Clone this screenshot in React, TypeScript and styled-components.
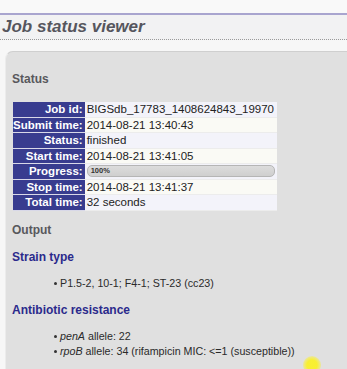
import React from "react";
import styled, { createGlobalStyle } from "styled-components";

const Global = createGlobalStyle`
  html, body { margin: 0; padding: 0; background: #f7f7f7; }
  body { font-family: "Liberation Sans", Arial, sans-serif; overflow: hidden; }
`;

const Page = styled.div`
  width: 347px;
  height: 369px;
  position: relative;
  overflow: hidden;
  background: #f7f7f7;
`;

const TopBar = styled.div`
  height: 13px;
  background: #f9f9f9;
  border-bottom: 2px solid #a9a5cf;
`;

const TitleBar = styled.div`
  height: 22px;
  padding: 2px 0 0 2px;
  background: #f2f2f3;
  border-bottom: 1px dotted #9a9a9a;
`;

const Title = styled.h1`
  margin: 0;
  font-size: 17px;
  font-weight: bold;
  font-style: italic;
  color: #56565e;
  line-height: 20px;
`;

const Panel = styled.div`
  margin: 11px 0 0 5px;
  background: #e0e0e0;
  border-top: 1px solid #cfcfcf;
  border-left: 1px solid #ececec;
  border-top-left-radius: 8px;
  padding: 20px 0 0 6px;
  height: 320px;
`;

const SectionHead = styled.h2`
  margin: 0;
  font-size: 12px;
  font-weight: bold;
  color: #58585c;
  line-height: 14px;
`;

const Table = styled.table`
  margin: 16px 0 0 1px;
  border-collapse: separate;
  border-spacing: 0;
  width: 264px;
  font-size: 11.5px;
`;

const Label = styled.th`
  width: 68px;
  background: #383c8f;
  color: #ffffff;
  font-weight: bold;
  text-align: right;
  padding: 0 2px 0 0;
  height: 14.5px;
  line-height: 14px;
  border-bottom: 1px solid #d8d8e8;
  white-space: nowrap;
`;

const Value = styled.td<{ $alt: boolean }>`
  background: ${(p) => (p.$alt ? "#fafaf5" : "#f3f3fa")};
  color: #222;
  padding: 0 0 0 2px;
  height: 14.5px;
  line-height: 14px;
  border-bottom: 1px solid #ececec;
  white-space: nowrap;
`;

const ProgressTrack = styled.div`
  width: 188px;
  height: 12px;
  border: 1px solid #b5b5b5;
  border-radius: 5px;
  background: linear-gradient(#dcdcdc, #cfcfcf);
  font-size: 7.5px;
  font-weight: bold;
  line-height: 10px;
  padding-left: 3px;
  color: #333;
  box-sizing: border-box;
`;

const OutputHead = styled(SectionHead)`
  margin-top: 12px;
`;

const SubHead = styled.h3`
  margin: 13px 0 0 0;
  font-size: 12px;
  font-weight: bold;
  color: #2b2a8c;
  line-height: 14px;
`;

const List = styled.ul`
  margin: 12px 0 0 0;
  padding: 0 0 0 48px;
  font-size: 10.7px;
  color: #2a2a2a;
  line-height: 14.5px;
  list-style: none;
`;

const Item = styled.li`
  position: relative;
  &::before {
    content: "";
    position: absolute;
    left: -6px;
    top: 6px;
    width: 3px;
    height: 3px;
    border-radius: 50%;
    background: #333;
  }
`;

const Cursor = styled.div`
  position: absolute;
  left: 303px;
  top: 356px;
  width: 18px;
  height: 18px;
  border-radius: 50%;
  background: radial-gradient(circle, rgba(250, 240, 40, 0.95) 40%, rgba(250, 240, 60, 0.4) 70%, rgba(250,240,60,0) 100%);
`;

const rows: [string, React.ReactNode][] = [
  ["Job id:", "BIGSdb_17783_1408624843_19970"],
  ["Submit time:", "2014-08-21 13:40:43"],
  ["Status:", "finished"],
  ["Start time:", "2014-08-21 13:41:05"],
  ["Progress:", <ProgressTrack>100%</ProgressTrack>],
  ["Stop time:", "2014-08-21 13:41:37"],
  ["Total time:", "32 seconds"],
];

export default function App() {
  return (
    <Page>
      <Global />
      <TopBar />
      <TitleBar>
        <Title>Job status viewer</Title>
      </TitleBar>
      <Panel>
        <SectionHead>Status</SectionHead>
        <Table>
          <tbody>
            {rows.map(([k, v], i) => (
              <tr key={k}>
                <Label>{k}</Label>
                <Value $alt={i % 2 === 1}>{v}</Value>
              </tr>
            ))}
          </tbody>
        </Table>
        <OutputHead>Output</OutputHead>
        <SubHead>Strain type</SubHead>
        <List>
          <Item>P1.5-2, 10-1; F4-1; ST-23 (cc23)</Item>
        </List>
        <SubHead>Antibiotic resistance</SubHead>
        <List>
          <Item><i>penA</i> allele: 22</Item>
          <Item><i>rpoB</i> allele: 34 (rifampicin MIC: &lt;=1 (susceptible))</Item>
        </List>
      </Panel>
      <Cursor />
    </Page>
  );
}
